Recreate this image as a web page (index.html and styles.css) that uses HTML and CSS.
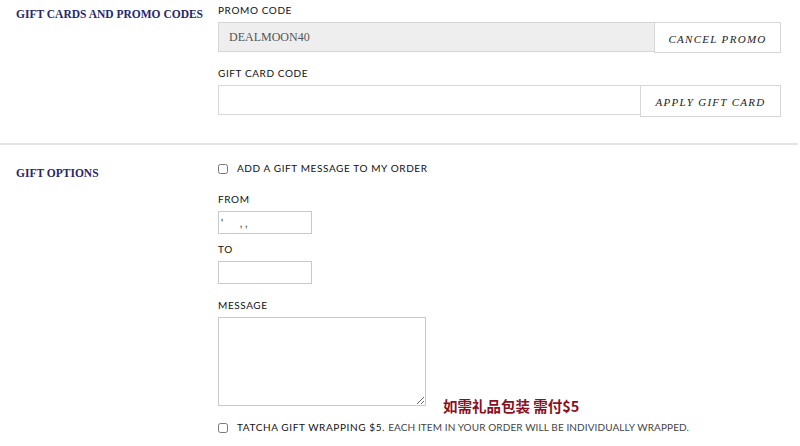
FILE: index.html
```html
<!DOCTYPE html>
<html lang="en">
<head>
    <meta charset="UTF-8">
    <title>Checkout - Gift Options</title>
    <link rel="stylesheet" href="styles.css">
</head>
<body>
    <div class="section promo-section">
        <div class="section-title">Gift Cards and Promo Codes</div>
        <div class="section-body">
            <div class="field-label">Promo Code</div>
            <div class="code-row">
                <input class="code-input applied" type="text" value="DEALMOON40" readonly>
                <button class="code-btn cancel-btn">Cancel Promo</button>
            </div>
            <div class="field-label second">Gift Card Code</div>
            <div class="code-row">
                <input class="code-input" type="text">
                <button class="code-btn apply-btn">Apply Gift Card</button>
            </div>
        </div>
    </div>

    <div class="section gift-section">
        <div class="section-title">Gift Options</div>
        <div class="section-body">
            <label class="check-row">
                <input type="checkbox" class="check">
                <span>Add a gift message to my order</span>
            </label>
            <div class="field-label from-label">From</div>
            <input class="small-input" type="text" value="'&#8195;&#8194;,&#8201;,">
            <div class="field-label to-label">To</div>
            <input class="small-input" type="text">
            <div class="field-label msg-label">Message</div>
            <div class="msg-row">
                <textarea class="msg-box"></textarea>
                <div class="wrap-note">如需礼品包装 需付$5</div>
            </div>
            <label class="check-row wrap-row">
                <input type="checkbox" class="check">
                <span>Tatcha gift wrapping $5. <em class="light">Each item in your order will be individually wrapped.</em></span>
            </label>
        </div>
    </div>
</body>
</html>
```

FILE: styles.css
```css
/* Page */
body {
    margin: 0;
    background: #fff;
    font-family: Lato, "Liberation Sans", sans-serif;
    color: #222;
}

/* Sections */
.section {
    display: flex;
}

.promo-section {
    padding-top: 4px;
    height: 139px;
    border-bottom: 2px solid #e3e3e3;
    width: 798px;
}

.gift-section {
    padding-top: 17px;
}

.section-title {
    width: 202px;
    padding-left: 16px;
    padding-top: 4px;
    font-family: "Liberation Serif", serif;
    font-weight: bold;
    font-size: 11.5px;
    text-transform: uppercase;
    color: #27276b;
}

.gift-section .section-title {
    padding-top: 5px;
}

.section-body {
    width: 563px;
}

/* Labels */
.field-label {
    font-size: 10px;
    letter-spacing: 0.6px;
    text-transform: uppercase;
    color: #111;
    height: 12px;
    margin-bottom: 6px;
}

.field-label.second {
    margin-top: 14px;
}

/* Promo and gift card rows */
.code-row {
    display: flex;
}

.code-input {
    flex: 1;
    height: 30px;
    box-sizing: border-box;
    border: 1px solid #d6d6d6;
    border-right: none;
    padding: 0 10px;
    font-family: "Liberation Serif", serif;
    font-size: 12px;
    color: #555;
    background: #fff;
    outline: none;
}

.code-input.applied {
    background: #eeeeee;
}

.code-btn {
    height: 31px;
    box-sizing: border-box;
    border: 1px solid #d6d6d6;
    background: #fff;
    font-family: "Liberation Serif", serif;
    font-style: italic;
    font-size: 11px;
    letter-spacing: 1.3px;
    text-transform: uppercase;
    color: #222;
    padding: 2px 0 0;
}

.cancel-btn {
    width: 127px;
}

.apply-btn {
    width: 141px;
    height: 32px;
}

/* Gift options */
.check-row {
    display: flex;
    align-items: center;
    font-size: 10px;
    letter-spacing: 0.6px;
    text-transform: uppercase;
    color: #111;
}

.check {
    width: 10px;
    height: 10px;
    margin: 2px 9px 0 0;
}

.from-label {
    margin-top: 19px;
}

.to-label {
    margin-top: 9px;
}

.msg-label {
    margin-top: 15px;
}

.small-input {
    display: block;
    width: 94px;
    height: 23px;
    box-sizing: border-box;
    border: 1px solid #c9c9c9;
    padding: 0 2px;
    font-size: 11px;
    color: #333;
    outline: none;
}

.msg-row {
    display: flex;
    align-items: flex-end;
}

.msg-box {
    width: 208px;
    height: 89px;
    box-sizing: border-box;
    border: 1px solid #c9c9c9;
    margin: 0;
    resize: both;
}

.wrap-note {
    margin-left: 17px;
    margin-bottom: -10px;
    font-family: "Noto Sans CJK SC", sans-serif;
    font-weight: bold;
    font-size: 14.5px;
    color: #8b0f1f;
}

.wrap-row {
    margin-top: 15px;
}

.light {
    font-style: normal;
    letter-spacing: 0.1px;
    color: #444;
}
```
